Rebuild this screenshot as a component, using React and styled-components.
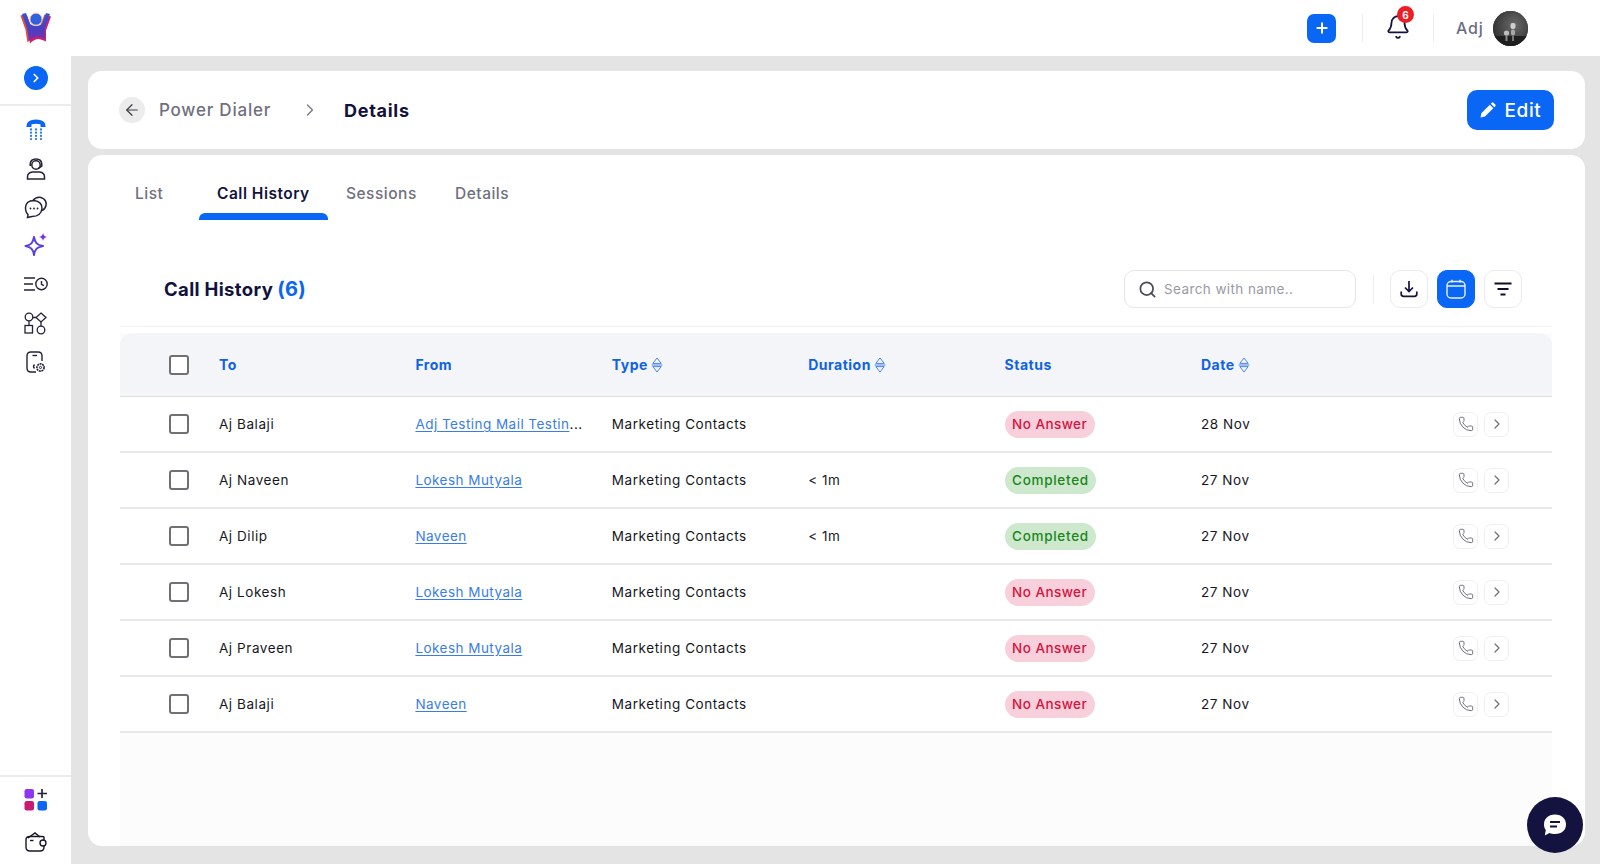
import React from "react";
import styled, { createGlobalStyle } from "styled-components";
import { Search, Phone, ChevronRight, ArrowLeft, Bell, Plus } from "lucide-react";

const GlobalStyle = createGlobalStyle`
  html, body {
    margin: 0;
    padding: 0;
    height: 100%;
    background: #e4e4e4;
    font-family: Inter, "Noto Sans", "Liberation Sans", sans-serif;
  }
  * {
    box-sizing: border-box;
  }
`;

const Page = styled.div`
  position: relative;
  display: flex;
  width: 1600px;
  height: 864px;
  overflow: hidden;
  background: #e4e4e4;
`;

const Sidebar = styled.aside`
  width: 71px;
  flex-shrink: 0;
  display: flex;
  flex-direction: column;
  background: #fff;
`;

const LogoBox = styled.div`
  height: 106px;
  flex-shrink: 0;
  display: flex;
  flex-direction: column;
  align-items: center;
  padding-top: 12px;
  gap: 21px;
  border-bottom: 2px solid #ececec;
`;

const ExpandBtn = styled.div`
  width: 24px;
  height: 24px;
  border-radius: 50%;
  background: #0a66f5;
  color: #fff;
  display: flex;
  align-items: center;
  justify-content: center;
`;

const NavList = styled.nav`
  flex: 1;
  display: flex;
  flex-direction: column;
  align-items: center;
  padding-top: 12px;
  gap: 13.6px;
`;

const NavItem = styled.div`
  width: 26px;
  height: 25px;
  display: flex;
  align-items: center;
  justify-content: center;
`;

const SideBottom = styled.div`
  height: 89px;
  flex-shrink: 0;
  display: flex;
  flex-direction: column;
  align-items: center;
  padding-top: 11px;
  gap: 20px;
  border-top: 2px solid #ececec;
`;

const Main = styled.div`
  flex: 1;
  min-width: 0;
  display: flex;
  flex-direction: column;
`;

const TopBar = styled.header`
  height: 56px;
  flex-shrink: 0;
  display: flex;
  align-items: center;
  background: #fff;
  padding-left: 1236px;
`;

const AddBtn = styled.div`
  width: 29px;
  height: 29px;
  border-radius: 7px;
  background: #0a66f5;
  color: #fff;
  display: flex;
  align-items: center;
  justify-content: center;
`;

const VLine = styled.div`
  width: 1px;
  height: 28px;
  background: #ececec;
  margin-left: ${({ $left }) => $left}px;
`;

const BellWrap = styled.div`
  position: relative;
  margin-left: 22px;
  width: 26px;
  height: 28px;
  color: #14123f;
`;

const BellBadge = styled.span`
  position: absolute;
  top: -8px;
  left: 12px;
  width: 17px;
  height: 17px;
  border-radius: 50%;
  background: #ee1c25;
  color: #fff;
  font-size: 10px;
  font-weight: 700;
  display: flex;
  align-items: center;
  justify-content: center;
`;

const UserName = styled.span`
  margin-left: 22px;
  font-size: 16px;
  font-weight: 500;
  letter-spacing: 0.8px;
  color: #6d6d80;
`;

const Avatar = styled.div`
  margin-left: 9px;
  width: 35px;
  height: 35px;
  border-radius: 50%;
  overflow: hidden;
  background: #3d3d3d;
`;

const Content = styled.main`
  flex: 1;
  min-height: 0;
  display: flex;
  flex-direction: column;
  gap: 6px;
  padding: 15px 15px 18px 17px;
`;

const HeaderCard = styled.section`
  height: 78px;
  flex-shrink: 0;
  background: #fff;
  border-radius: 14px;
  display: flex;
  align-items: center;
  padding: 0 31px 0 31px;
`;

const BackBtn = styled.div`
  width: 26px;
  height: 26px;
  border-radius: 50%;
  background: #ececec;
  color: #3d3d48;
  display: flex;
  align-items: center;
  justify-content: center;
`;

const Crumb = styled.span`
  margin-left: 14px;
  font-size: 17px;
  font-weight: 500;
  letter-spacing: 0.78px;
  color: #6f6f7e;
`;

const CrumbArrow = styled.span`
  margin-left: 29px;
  color: #77778a;
  display: flex;
`;

const CrumbActive = styled.span`
  margin-left: 24px;
  font-size: 18px;
  font-weight: 700;
  letter-spacing: 0.7px;
  color: #12123c;
`;

const EditBtn = styled.button`
  margin-left: auto;
  width: 87px;
  height: 40px;
  border: none;
  border-radius: 10px;
  background: #0a66f5;
  color: #fff;
  font-family: inherit;
  font-size: 19px;
  font-weight: 500;
  letter-spacing: 0.6px;
  display: flex;
  align-items: center;
  justify-content: center;
  gap: 9px;
`;

const BodyCard = styled.section`
  flex: 1;
  min-height: 0;
  background: #fff;
  border-radius: 14px;
  display: flex;
  flex-direction: column;
  padding: 0 33px 0 32px;
`;

const Tabs = styled.div`
  height: 65px;
  flex-shrink: 0;
  display: grid;
  grid-template-columns: 82px 129px 109px 100px;
  margin-left: -3px;
`;

const Tab = styled.div`
  position: relative;
  display: flex;
  align-items: center;
  height: 65px;
  padding: 11px 0 0 18px;
  font-size: 15.5px;
  font-weight: ${({ $active }) => ($active ? 600 : 500)};
  letter-spacing: ${({ $active }) => ($active ? "0.5px" : "0.5px")};
  color: ${({ $active }) => ($active ? "#12123c" : "#6f6f7e")};
  ${({ $active }) =>
    $active &&
    `&::after {
      content: "";
      position: absolute;
      left: 0;
      right: 0;
      bottom: 0;
      height: 7px;
      border-radius: 6px 6px 0 0;
      background: #0a66f5;
    }`}
`;

const Toolbar = styled.div`
  flex-shrink: 0;
  height: 38px;
  margin-top: 50px;
  display: flex;
  align-items: center;
  padding-left: 44px;
`;

const Title = styled.h2`
  margin: 0;
  font-size: 18.5px;
  font-weight: 700;
  letter-spacing: 0.35px;
  color: #12123c;
`;

const Count = styled.span`
  color: #0a66f5;
  margin-left: 4px;
  font-size: 20px;
`;

const SearchBox = styled.div`
  margin-left: auto;
  width: 232px;
  height: 38px;
  border: 1px solid #e6e6e9;
  border-radius: 10px;
  display: flex;
  align-items: center;
  gap: 7px;
  padding-left: 13px;
  color: #4c4c55;
`;

const SearchText = styled.span`
  font-size: 13.5px;
  letter-spacing: 0.4px;
  color: #9a9aa4;
`;

const ToolSep = styled.div`
  width: 1px;
  height: 30px;
  background: #efeff1;
  margin: 0 16px 0 17px;
`;

const ToolBtn = styled.div`
  width: 38px;
  height: 38px;
  border-radius: 10px;
  border: 1px solid ${({ $active }) => ($active ? "#0a66f5" : "#ebebee")};
  background: ${({ $active }) => ($active ? "#0a66f5" : "#fff")};
  color: ${({ $active }) => ($active ? "#e8f0ff" : "#14123f")};
  display: flex;
  align-items: center;
  justify-content: center;
  margin-right: ${({ $last }) => ($last ? "30px" : "9px")};
`;

const Divider = styled.div`
  flex-shrink: 0;
  height: 1px;
  margin-top: 18px;
  background: #f1f1f3;
`;

const Table = styled.div`
  margin-top: 6px;
  flex: 1;
  min-height: 0;
  display: flex;
  flex-direction: column;
  background: #fcfcfc;
`;

const HeadRow = styled.div`
  flex-shrink: 0;
  height: 64px;
  display: grid;
  grid-template-columns: 99px repeat(6, 196.4px) 1fr;
  align-items: center;
  background: #f3f5f9;
  border-radius: 12px 12px 0 0;
  border-bottom: 1px solid #dedfe3;
`;

const Row = styled.div`
  flex-shrink: 0;
  height: 56px;
  display: grid;
  grid-template-columns: 99px repeat(6, 196.4px) 1fr;
  align-items: center;
  background: #fff;
  border-bottom: 2px solid #e8e8eb;
`;

const Check = styled.div`
  width: 20px;
  height: 20px;
  margin-left: 49px;
  border: 2px solid #707074;
  border-radius: 3px;
  background: #fff;
`;

const HeadCell = styled.div`
  display: flex;
  align-items: center;
  gap: 3px;
  font-size: 14px;
  font-weight: 700;
  letter-spacing: 0.5px;
  color: #0f62e6;
`;

const Cell = styled.div`
  min-width: 0;
  font-size: 13.5px;
  letter-spacing: 0.56px;
  color: #17171c;
  white-space: nowrap;
`;

const ContactLink = styled.a`
  color: #3a7de6;
  letter-spacing: 0.46px;
  text-decoration: underline;
  text-underline-offset: 2px;
`;

const Pill = styled.span`
  display: inline-flex;
  align-items: center;
  height: 27px;
  padding: 0 7.5px;
  border-radius: 14px;
  font-size: 13.5px;
  font-weight: 500;
  letter-spacing: ${({ $ok }) => ($ok ? "0.7px" : "0.45px")};
  background: ${({ $ok }) => ($ok ? "#cde8cd" : "#f8d0dc")};
  color: ${({ $ok }) => ($ok ? "#1a861c" : "#d6123e")};
`;

const Actions = styled.div`
  display: flex;
  justify-content: flex-end;
  gap: 6px;
  padding-right: 43px;
`;

const ActionBtn = styled.div`
  width: 25px;
  height: 25px;
  border: 1px solid #efeff1;
  border-radius: 7px;
  color: #6f6f77;
  display: flex;
  align-items: center;
  justify-content: center;
`;

const ChatBubble = styled.div`
  position: absolute;
  right: 17px;
  bottom: 11px;
  width: 56px;
  height: 56px;
  border-radius: 50%;
  background: #14123f;
  display: flex;
  align-items: center;
  justify-content: center;
`;

const figure = "M3 2 L7 1 L11 12 Q17 16 23 12 L27 1 L31 2 L26 16 L26 27 Q17 21 10 29 L8 16 Z";

const Logo = () => (
  <svg width="34" height="33" viewBox="0 0 34 33">
    <defs>
      <linearGradient id="logoBody" x1="0" y1="0" x2="0" y2="1">
        <stop offset="0" stopColor="#2f55d8" />
        <stop offset="0.6" stopColor="#4a3fc0" />
        <stop offset="1" stopColor="#7b2fb0" />
      </linearGradient>
    </defs>
    <path d={figure} fill="#e0503a" transform="translate(-1.6 1.6)" />
    <path d={figure} fill="#d21d6e" transform="translate(1 2.6)" />
    <path d={figure} fill="url(#logoBody)" />
    <circle cx="17" cy="7.2" r="6" fill="#2f62e0" stroke="#f4b5ac" strokeWidth="1" />
  </svg>
);

const DialIcon = () => (
  <svg width="22" height="22" viewBox="0 1.5 22 22" overflow="visible" fill="#2a7bf0">
    <path d="M1.5 7.5 Q1.5 1 11 1 Q20.5 1 20.5 7.5 L20.5 8.5 L15.5 8.5 L15.5 5.8 Q11 4.8 6.5 5.8 L6.5 8.5 L1.5 8.5 Z" fill="#0a66f5" />
    {[11, 14.2, 17.4, 20.6].map((y) =>
      [6, 11, 16].map((x) => <circle key={`${x}-${y}`} cx={x} cy={y} r="1.15" />)
    )}
  </svg>
);

const AgentIcon = () => (
  <svg width="20" height="22" viewBox="0 0 20 22" fill="none" stroke="#232338" strokeWidth="1.5">
    <circle cx="10" cy="7" r="4.2" />
    <path d="M4.2 8 V6.5 Q4.2 1 10 1 Q15.8 1 15.8 6.5 V8 L12 10.6" />
    <path d="M1.5 21 V19 Q1.5 14.5 6.5 14 L13.5 14 Q18.5 14.5 18.5 19 V21 Z" />
  </svg>
);

const ChatsIcon = () => (
  <svg width="24" height="24" viewBox="0 0.5 24 24" overflow="visible" fill="none" stroke="#232338" strokeWidth="1.5">
    <path d="M9 5 Q12 1 17 2 Q23 4 22 10 Q21 14 18 15" />
    <path d="M10 5 Q2 5 1.5 12 Q1.5 17 4 19 L3.5 22 L8 21 Q17 21 18 13 Q18 6 10 5 Z" fill="#fff" />
    <circle cx="6.5" cy="13" r="0.9" fill="#232338" stroke="none" />
    <circle cx="10" cy="13" r="0.9" fill="#232338" stroke="none" />
    <circle cx="13.5" cy="13" r="0.9" fill="#232338" stroke="none" />
  </svg>
);

const SparkIcon = () => (
  <svg width="24" height="24" viewBox="0 2 24 24" overflow="visible">
    <path d="M10 5 C11 11 13 13 19 14 C13 15 11 17 10 23 C9 17 7 15 1.5 14 C7 13 9 11 10 5 Z" fill="none" stroke="#5a3fe0" strokeWidth="2" strokeLinejoin="round" />
    <path d="M19 1 C19.5 3.5 20.5 4.5 23 5 C20.5 5.5 19.5 6.5 19 9 C18.5 6.5 17.5 5.5 15 5 C17.5 4.5 18.5 3.5 19 1 Z" fill="#7a32dd" />
  </svg>
);

const ClockListIcon = () => (
  <svg width="24" height="16" viewBox="0 1 24 16" overflow="visible" fill="none" stroke="#232338" strokeWidth="1.4">
    <path d="M0 2 H11 M0 8 H9 M0 14 H11" />
    <circle cx="17.5" cy="8" r="5.7" />
    <path d="M17.5 5 V8.3 L20 9.6" />
  </svg>
);

const FlowIcon = () => (
  <svg width="23" height="23" viewBox="0 0 23 23" fill="none" stroke="#232338" strokeWidth="1.3">
    <circle cx="5" cy="5" r="3.8" />
    <path d="M17 1 L22 5.5 L17 10 L12 5.5 Z" />
    <rect x="1" y="13.5" width="7.5" height="7.5" />
    <circle cx="17" cy="18" r="3.8" />
    <path d="M8.8 5.5 H12 M5 8.8 V13.5 M17 10 V14.2" />
  </svg>
);

const DeviceIcon = () => (
  <svg width="20" height="23" viewBox="0 0 20 23" fill="none" stroke="#232338" strokeWidth="1.4">
    <path d="M10 21 H5 Q1 21 1 17 V5 Q1 1 5 1 H12 Q16 1 16 5 V10" />
    <path d="M6.5 4.5 H11" />
    <path d="M8.5 13.5 Q6.5 15.5 8.5 17.5" />
    <circle cx="14.5" cy="16.5" r="3.6" strokeDasharray="2 0.6" strokeWidth="1.6" />
    <circle cx="14.5" cy="16.5" r="1.1" strokeWidth="1" />
  </svg>
);

const AppsIcon = () => (
  <svg width="24" height="24" viewBox="0 0 24 24">
    <rect x="0.5" y="1" width="9.5" height="9.5" rx="2.2" fill="#8e35ef" />
    <rect x="0.5" y="13" width="9.5" height="9.5" rx="2.2" fill="#c81a73" />
    <rect x="13.5" y="13" width="9.5" height="9.5" rx="2.2" fill="#0a66f5" />
    <path d="M18 1 V10 M13.5 5.5 H23" stroke="#232338" strokeWidth="1.7" />
  </svg>
);

const WalletIcon = () => (
  <svg width="22" height="20" viewBox="0 0 22 20" fill="none" stroke="#17172c" strokeWidth="1.4">
    <path d="M3 6 L10 1 L15 5" />
    <path d="M19 8 V5.5 Q19 4.5 17 4.5 H5 Q1 4.5 1 8 V15 Q1 19 5 19 H15 Q19 19 19 15 V14" />
    <path d="M5 8.5 H8.5" />
    <circle cx="18" cy="11" r="3" />
  </svg>
);

const PencilIcon = () => (
  <svg width="16" height="16" viewBox="0 0 16 16" fill="#fff">
    <path d="M0.5 15.5 L1.5 11 L9.8 2.7 L13.3 6.2 L5 14.5 Z" />
    <path d="M10.8 1.7 L11.8 0.7 Q12.6 0 13.4 0.7 L15.3 2.6 Q16 3.4 15.3 4.2 L14.3 5.2 Z" />
  </svg>
);

const DownloadIcon = () => (
  <svg width="18" height="18" viewBox="0 0 18 18" fill="none" stroke="currentColor" strokeWidth="1.7">
    <path d="M9 1 V11 M5 7.5 L9 11.5 L13 7.5" />
    <path d="M1.2 11.5 V14 Q1.2 16.3 3.5 16.3 H14.5 Q16.8 16.3 16.8 14 V11.5" />
  </svg>
);

const CalendarIcon = () => (
  <svg width="20" height="20" viewBox="0 0 20 20" fill="none" stroke="currentColor" strokeWidth="1.4">
    <rect x="1" y="2.5" width="18" height="16.5" rx="4" />
    <path d="M1 7 H19 M6 0.8 V3.5 M14 0.8 V3.5" />
  </svg>
);

const FilterIcon = () => (
  <svg width="18" height="14" viewBox="0 0 18 14" fill="none" stroke="#0e0e28" strokeWidth="2">
    <path d="M0.5 1.5 H17.5 M3.5 7 H14.5 M6.5 12.5 H11.5" />
  </svg>
);

const SortIcon = () => (
  <svg width="12" height="16" viewBox="0 0 12 16" fill="none" stroke="#4a87e8" strokeWidth="1">
    <path d="M1.8 6.4 L6 1 L10.2 6.4 Z M0.6 8 H11.4 M1.8 9.6 L6 15 L10.2 9.6 Z" strokeLinejoin="round" />
  </svg>
);

const ChatGlyph = () => (
  <svg width="24" height="24" viewBox="0 0 24 24">
    <path d="M12 1.5 C19 1.5 23 6 23 11.5 C23 17 19 21 12 21 C10 21 8 20.6 6.5 20 L1.8 22.5 L2.8 17 C1.5 15.5 1 13.5 1 11.5 C1 6 5 1.5 12 1.5 Z" fill="#fff" />
    <path d="M7 9 H17 M7 13.5 H14" stroke="#14123f" strokeWidth="2" />
  </svg>
);

const AvatarArt = () => (
  <svg width="35" height="35" viewBox="0 0 35 35">
    <defs>
      <radialGradient id="avatarBg" cx="0.6" cy="0.4" r="0.7">
        <stop offset="0" stopColor="#6a6a6a" />
        <stop offset="1" stopColor="#2b2b2b" />
      </radialGradient>
    </defs>
    <rect width="35" height="35" fill="url(#avatarBg)" />
    <rect y="25" width="35" height="10" fill="#1f1f1f" />
    <rect x="17.5" y="12" width="5" height="6" rx="2" fill="#cfcfcf" />
    <rect x="18" y="18.5" width="4" height="6" rx="2" fill="#a9a9a9" />
    <circle cx="13.5" cy="22" r="2.6" fill="#bdbdbd" />
    <rect x="12.5" y="24" width="2" height="6" fill="#8a8a8a" />
    <rect x="19" y="25" width="2" height="5" fill="#777" />
  </svg>
);

const navIcons = [DialIcon, AgentIcon, ChatsIcon, SparkIcon, ClockListIcon, FlowIcon, DeviceIcon];

const columns = [
  { label: "To" },
  { label: "From" },
  { label: "Type", sort: true },
  { label: "Duration", sort: true },
  { label: "Status" },
  { label: "Date", sort: true },
];

const calls = [
  { to: "Aj Balaji", from: "Adj Testing Mail Testin", more: "...", duration: "", ok: false, date: "28 Nov" },
  { to: "Aj Naveen", from: "Lokesh Mutyala", duration: "< 1m", ok: true, date: "27 Nov" },
  { to: "Aj Dilip", from: "Naveen", duration: "< 1m", ok: true, date: "27 Nov" },
  { to: "Aj Lokesh", from: "Lokesh Mutyala", duration: "", ok: false, date: "27 Nov" },
  { to: "Aj Praveen", from: "Lokesh Mutyala", duration: "", ok: false, date: "27 Nov" },
  { to: "Aj Balaji", from: "Naveen", duration: "", ok: false, date: "27 Nov" },
];

const App = () => {
  return (
    <Page>
      <GlobalStyle />
      <Sidebar>
        <LogoBox>
          <Logo />
          <ExpandBtn>
            <ChevronRight size={14} strokeWidth={3} />
          </ExpandBtn>
        </LogoBox>
        <NavList>
          {navIcons.map((Icon, i) => (
            <NavItem key={i}>
              <Icon />
            </NavItem>
          ))}
        </NavList>
        <SideBottom>
          <AppsIcon />
          <WalletIcon />
        </SideBottom>
      </Sidebar>

      <Main>
        <TopBar>
          <AddBtn>
            <Plus size={16} strokeWidth={3} />
          </AddBtn>
          <VLine $left={26} />
          <BellWrap>
            <Bell size={26} strokeWidth={1.6} />
            <BellBadge>6</BellBadge>
          </BellWrap>
          <VLine $left={22} />
          <UserName>Adj</UserName>
          <Avatar>
            <AvatarArt />
          </Avatar>
        </TopBar>

        <Content>
          <HeaderCard>
            <BackBtn>
              <ArrowLeft size={18} strokeWidth={1.6} />
            </BackBtn>
            <Crumb>Power Dialer</Crumb>
            <CrumbArrow>
              <ChevronRight size={20} strokeWidth={1.6} />
            </CrumbArrow>
            <CrumbActive>Details</CrumbActive>
            <EditBtn>
              <PencilIcon />
              Edit
            </EditBtn>
          </HeaderCard>

          <BodyCard>
            <Tabs>
              <Tab>List</Tab>
              <Tab $active>Call History</Tab>
              <Tab>Sessions</Tab>
              <Tab>Details</Tab>
            </Tabs>

            <Toolbar>
              <Title>
                Call History<Count>(6)</Count>
              </Title>
              <SearchBox>
                <Search size={19} strokeWidth={2.2} />
                <SearchText>Search with name..</SearchText>
              </SearchBox>
              <ToolSep />
              <ToolBtn>
                <DownloadIcon />
              </ToolBtn>
              <ToolBtn $active>
                <CalendarIcon />
              </ToolBtn>
              <ToolBtn $last>
                <FilterIcon />
              </ToolBtn>
            </Toolbar>
            <Divider />

            <Table>
              <HeadRow>
                <Check />
                {columns.map((c) => (
                  <HeadCell key={c.label}>
                    {c.label}
                    {c.sort && <SortIcon />}
                  </HeadCell>
                ))}
                <div />
              </HeadRow>
              {calls.map((call, i) => (
                <Row key={i}>
                  <Check />
                  <Cell>{call.to}</Cell>
                  <Cell>
                    <ContactLink>{call.from}</ContactLink>
                    {call.more}
                  </Cell>
                  <Cell>Marketing Contacts</Cell>
                  <Cell>{call.duration}</Cell>
                  <Cell>
                    <Pill $ok={call.ok}>{call.ok ? "Completed" : "No Answer"}</Pill>
                  </Cell>
                  <Cell>{call.date}</Cell>
                  <Actions>
                    <ActionBtn>
                      <Phone size={16} strokeWidth={1.5} />
                    </ActionBtn>
                    <ActionBtn>
                      <ChevronRight size={16} strokeWidth={1.8} />
                    </ActionBtn>
                  </Actions>
                </Row>
              ))}
            </Table>
          </BodyCard>
        </Content>
      </Main>

      <ChatBubble>
        <ChatGlyph />
      </ChatBubble>
    </Page>
  );
};

export default App;
